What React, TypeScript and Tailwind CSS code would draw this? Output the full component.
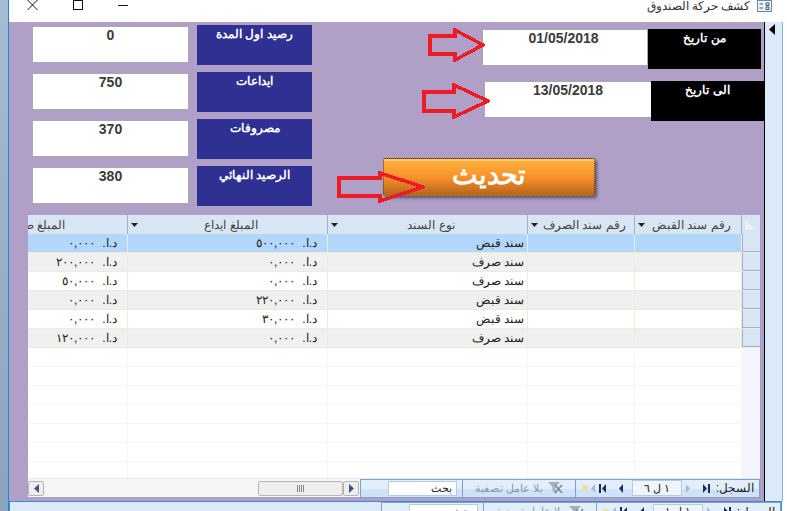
const font = "font-['Liberation_Sans','Noto_Sans',sans-serif]";

const stats = [
  { label: "رصيد اول المدة", value: "0" },
  { label: "ايداعات", value: "750" },
  { label: "مصروفات", value: "370" },
  { label: "الرصيد النهائي", value: "380" },
];

const rows = [
  { type: "سند قبض", dep: "٥٠٠,٠٠٠", out: "٠,٠٠٠" },
  { type: "سند صرف", dep: "٠,٠٠٠", out: "٢٠٠,٠٠٠" },
  { type: "سند صرف", dep: "٠,٠٠٠", out: "٥٠,٠٠٠" },
  { type: "سند قبض", dep: "٢٢٠,٠٠٠", out: "٠,٠٠٠" },
  { type: "سند قبض", dep: "٣٠,٠٠٠", out: "٠,٠٠٠" },
  { type: "سند صرف", dep: "٠,٠٠٠", out: "١٢٠,٠٠٠" },
];

const Arrow = ({ w, h, top, bottom, head, className = "" }: { w: number; h: number; top: number; bottom: number; head: number; className?: string }) => (
  <svg width={w} height={h} viewBox={`0 0 ${w} ${h}`} shapeRendering="crispEdges" className={className}>
    <path d={`M2 ${top}H${head}V2L${w - 2} ${h / 2}L${head} ${h - 2}V${bottom}H2Z`} fill="none" stroke="#ed1c24" strokeWidth="3.5" />
  </svg>
);

const Caret = () => (
  <svg width="7" height="4" viewBox="0 0 7 4" className="shrink-0">
    <path d="M0 0H7L3.5 4Z" fill="#222" />
  </svg>
);

const Header = ({ text, width }: { text: string; width: string }) => (
  <div className={`${width} shrink-0 h-[19px] flex items-center border-r border-[#9db0cf] bg-[#d8e6f3] pl-[3px] pr-[3px] overflow-hidden`}>
    <Caret />
    <span dir="rtl" className="flex-1 text-center text-[12px] text-[#444] whitespace-nowrap">{text}</span>
  </div>
);

const Cell = ({ text, width, pad = "pr-[10px]" }: { text?: string; width: string; pad?: string }) => (
  <div dir="rtl" className={`${width} ${pad} shrink-0 h-full flex items-center border-r border-[#ecebdc] text-[12px] text-[#222] whitespace-nowrap overflow-hidden`}>
    {text}
  </div>
);

const Money = ({ value, width }: { value: string; width: string }) => (
  <div dir="rtl" className={`${width} pr-[10px] shrink-0 h-full flex items-center gap-[7px] border-r border-[#ecebdc] text-[12px] text-[#222] whitespace-nowrap overflow-hidden`}>
    <span className="tracking-[2px]">د.ا.</span>
    <span className="tracking-[3.5px]">{value}</span>
  </div>
);

const NavTri = ({ dir, bar, muted, className = "" }: { dir: "l" | "r"; bar?: boolean; muted?: boolean; className?: string }) => (
  <svg width="8" height="9" viewBox="0 0 8 9" className={`shrink-0 ${className}`}>
    <g fill={muted ? "#a9bcd6" : "#15305f"}>
      {bar && <rect x={dir === "l" ? 0 : 6} y="0" width="2" height="9" />}
      <path d={dir === "l" ? "M7 0V9L3 4.5Z" : "M1 0V9L5 4.5Z"} />
    </g>
  </svg>
);

const Funnel = () => (
  <svg width="16" height="12" viewBox="0 0 16 12" className="shrink-0">
    <path d="M1 0H13L8.5 5V11L5.5 9V5Z" fill="#a9b0b8" />
    <path d="M8 3L15 11M15 3L8 11" stroke="#7d8791" strokeWidth="1.5" />
  </svg>
);

const Pager = ({ range }: { range: string }) => (
  <div className="w-[400px] h-[19px] shrink-0 flex flex-row-reverse items-center bg-[linear-gradient(#e3eefb_50%,#cfe2f9_50%)] border border-[#7da2ce]">
    <div dir="rtl" className="w-[184px] h-full shrink-0 flex items-center border-l border-[#7da2ce] pr-[5px]">
      <span className="w-[32px] ml-[12px] text-[12px] text-[#222] whitespace-nowrap">السجل:</span>
      <NavTri dir="r" bar className="ml-[9px]" />
      <NavTri dir="r" muted className="ml-[3px]" />
      <div className="w-[50px] h-[16px] ml-[8px] bg-[#f0f5fc] border border-[#b9cbe2] flex items-center justify-center text-[11px] text-[#222]">{range}</div>
      <NavTri dir="l" className="ml-[9px]" />
      <NavTri dir="l" bar className="ml-[3px]" />
      <NavTri dir="l" muted />
      <div className="w-[6px] h-[6px] bg-[radial-gradient(#e6dfae_1px,transparent_1px)] bg-[length:2px_2px]" />
    </div>
    <div dir="rtl" className="w-[113px] h-full shrink-0 flex items-center justify-center gap-1 border-l border-[#7da2ce]">
      <Funnel />
      <span className="text-[11px] text-[#8c98a8] whitespace-nowrap">بلا عامل تصفية</span>
    </div>
    <div className="flex-1 h-full flex items-center pl-[27px] pr-[5px]">
      <div dir="rtl" className="w-full h-[15px] bg-white border border-[#b9cbe2] px-1 flex items-center text-[11px] text-[#222]">بحث</div>
    </div>
  </div>
);

export default function App() {
  return (
    <div className={`${font} w-[787px] h-[511px] overflow-hidden flex bg-white`}>
      <div className="w-2 shrink-0 border-r border-[#1f86d0] bg-gradient-to-b from-[#a5bcd2] to-[#8ba3bd] box-content" />

      <div className="flex-1 min-w-0 flex flex-col">
        <div className="h-[22px] shrink-0 bg-white flex items-start justify-between pr-[15px]">
          <div className="flex items-start gap-[35px] pl-[18px]">
            <svg width="11" height="10" viewBox="0 0 11 10">
              <path d="M0.5 0L10.5 10M10.5 0L0.5 10" stroke="#111" strokeWidth="1" />
            </svg>
            <div className="w-[10px] h-[10px] border border-[#111]" />
            <div className="mt-[5px] w-[10px] h-px bg-[#111]" />
          </div>
          <div className="flex items-start gap-[7px]">
            <span dir="rtl" className="text-[11.5px] leading-[13px] text-[#333]">كشف حركة الصندوق</span>
            <svg width="15" height="12" viewBox="0 0 15 12">
              <rect x="0.5" y="0.5" width="14" height="11" fill="#eef3fa" stroke="#6d88b3" />
              <path d="M2.5 4H6M2.5 8H6M9 3H12V5.5H9ZM9 7H12V9.5H9Z" stroke="#36558a" fill="none" />
            </svg>
          </div>
        </div>

        <div className="h-[479px] shrink-0 flex">
          <div className="w-[755px] shrink-0 bg-[#b09fc6] flex flex-col">
            <div className="h-[193px] shrink-0 flex">
              <div className="ml-[23px] w-[280px] shrink-0 pt-[3px] flex flex-col gap-[7px]">
                {stats.map((s) => (
                  <div key={s.label} className="h-10 flex items-start">
                    <div className="w-[157px] h-[37px] mt-px bg-white border border-[#aaa] text-center font-bold text-[14px] text-[#3a3a3a] leading-[17px]">{s.value}</div>
                    <div dir="rtl" className="ml-[8px] w-[115px] h-10 bg-[#2e3192] text-white text-center font-bold text-[12px]">{s.label}</div>
                  </div>
                ))}
              </div>

              <div className="relative flex-1 min-w-0">
                <div className="mt-[7px] mr-[3px] flex justify-end items-start">
                  <Arrow w={57} h={34} top={8} bottom={26} head={27} className="relative z-10 -mt-px -mr-[3px]" />
                  <div className="w-[166px] h-[37px] pr-[3px] bg-white border border-[#aaa] text-center font-bold text-[14px] text-[#3a3a3a] leading-[17px]">01/05/2018</div>
                  <div dir="rtl" className="w-[113px] h-10 bg-black text-white text-center font-bold text-[12px]">من تاريخ</div>
                </div>
                <div className="mt-[12px] flex justify-end items-start">
                  <Arrow w={68} h={36} top={9} bottom={28} head={32} className="relative z-10 mt-[2px] -mr-[6px]" />
                  <div className="w-[168px] h-[37px] -mr-px bg-white border border-[#aaa] text-center font-bold text-[14px] text-[#3a3a3a] leading-[17px]">13/05/2018</div>
                  <div dir="rtl" className="w-[113px] h-10 bg-black text-white text-center font-bold text-[12px]">الى تاريخ</div>
                </div>

                <Arrow w={88} h={32} top={7} bottom={25} head={43} className="absolute left-[25px] top-[149px] z-10" />
                <div dir="rtl" className="ml-[71px] mt-[37px] w-[212px] h-[38px] rounded-[2px] border border-dotted border-[#4a3a22] bg-gradient-to-b from-[#fdb23e] via-[#f9922a] to-[#b8651e] shadow-[2px_2px_3px_rgba(60,50,70,0.7),inset_0_2px_0_rgba(255,220,140,0.6)] flex items-center justify-center text-white font-bold text-[27px] leading-none pb-[3px]">
                  تحديث
                </div>
              </div>
            </div>

            <div className="ml-[19px] w-[732px] h-[282px] bg-white flex flex-col">
              <div className="flex shrink-0">
                <div dir="rtl" className="w-[100px] shrink-0 h-[19px] flex items-center border-r border-[#9db0cf] bg-[#d8e6f3] pr-[62px] overflow-hidden">
                  <span className="text-[12px] text-[#444] whitespace-nowrap">المبلغ صرف</span>
                </div>
                <Header text="المبلغ ايداع" width="w-[200px]" />
                <Header text="نوع السند" width="w-[200px]" />
                <Header text="رقم سند الصرف" width="w-[107px]" />
                <Header text="رقم سند القبض" width="w-[107px]" />
                <div className="flex-1 bg-[#d8e6f3] flex items-center justify-center">
                  <svg width="12" height="10" viewBox="0 0 12 10">
                    <path d="M0 0L11 10H0Z" fill="#eef0f2" />
                  </svg>
                </div>
              </div>

              <div className="flex-1 min-h-0 overflow-hidden flex flex-col">
                {rows.map((r, i) => {
                  const bg = i === 0 ? "bg-[#b3d7fb]" : i % 2 === 1 ? "bg-[#f0f0f0]" : "bg-white";
                  return (
                    <div key={i} className={`flex h-[19px] shrink-0 border-b border-[#ecebdc] ${bg}`}>
                      <Money value={r.out} width="w-[100px]" />
                      <Money value={r.dep} width="w-[200px]" />
                      <Cell text={r.type} width="w-[200px]" pad="pr-[3px]" />
                      <Cell width="w-[107px]" />
                      <Cell width="w-[107px]" />
                      <div className="flex-1 bg-[#d8e6f3] border-b border-l border-[#9db0cf]" />
                    </div>
                  );
                })}
                {[0, 1, 2, 3, 4, 5, 6].map((i) => (
                  <div key={i} className="flex h-[19px] shrink-0 border-b border-[#f6f6f6]">
                    <div className="w-[100px] shrink-0 border-r border-[#f6f6f6]" />
                    <div className="w-[200px] shrink-0 border-r border-[#f6f6f6]" />
                    <div className="w-[200px] shrink-0 border-r border-[#f6f6f6]" />
                    <div className="w-[107px] shrink-0 border-r border-[#f6f6f6]" />
                    <div className="w-[107px] shrink-0 border-r border-[#f6f6f6]" />
                    <div className="flex-1 bg-[#f5f6fd]" />
                  </div>
                ))}
              </div>

              <div className="h-[19px] shrink-0 flex items-center bg-[#f6f6f6] border-t border-[#e8e8e8]">
                <div className="w-[332px] h-full flex items-center justify-between">
                  <div className="w-4 h-[15px] border border-[#b5b5b5] bg-[#eee] rounded-[2px] flex items-center justify-center">
                    <svg width="5" height="9" viewBox="0 0 5 9"><path d="M5 0V9L0 4.5Z" fill="#40557f" /></svg>
                  </div>
                  <div className="flex items-center pr-px">
                    <div className="w-[85px] h-[15px] border border-[#b5b5b5] bg-[#eee] rounded-[2px] flex items-center justify-center">
                      <div className="w-[7px] h-[7px] bg-[linear-gradient(90deg,#888_1px,transparent_1px)] bg-[length:2px_100%]" />
                    </div>
                    <div className="w-4 h-[15px] border border-[#b5b5b5] bg-[#eee] rounded-[2px] flex items-center justify-center">
                      <svg width="5" height="9" viewBox="0 0 5 9"><path d="M0 0V9L5 4.5Z" fill="#40557f" /></svg>
                    </div>
                  </div>
                </div>
                <Pager range="١ ل ٦" />
              </div>
            </div>
          </div>

          <div className="w-[18px] shrink-0 bg-[#dce9f8] border-l border-black">
            <svg width="6" height="11" viewBox="0 0 6 11" className="ml-1 mt-[2px]">
              <path d="M6 0V11L0 5.5Z" fill="#000" />
            </svg>
          </div>
          <div className="flex-1 border-l border-[#7fb0e0] bg-white" />
        </div>

        <div className="h-[10px] shrink-0 mr-[5px] bg-[#dce9f8] border-t border-l border-r border-[#3d8ad0] overflow-hidden flex justify-end">
          <Pager range="١ ل ١" />
        </div>
      </div>
    </div>
  );
}
